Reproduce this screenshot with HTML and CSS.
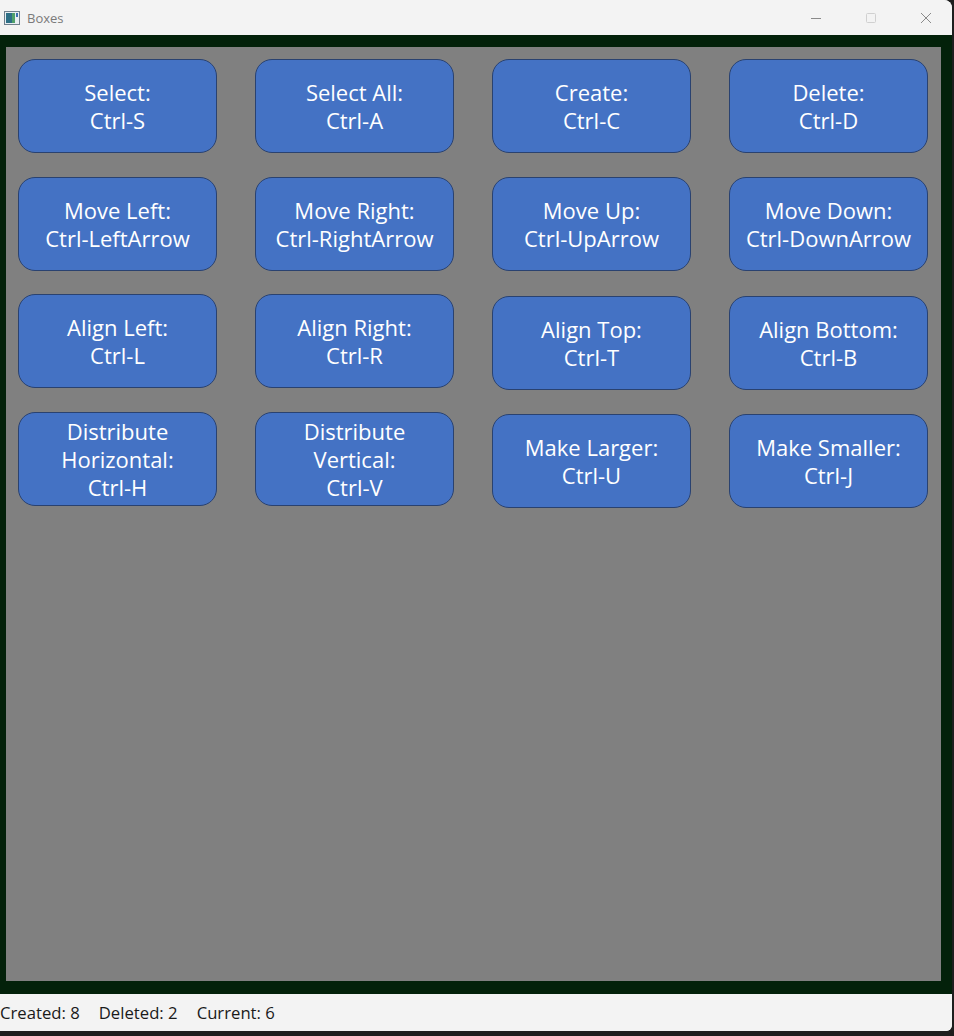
FILE: index.html
```html
<!DOCTYPE html>
<html>
<head>
<meta charset="utf-8">
<title>Boxes</title>
<link rel="stylesheet" href="styles.css">
</head>
<body>
<div class="window">
  <div class="titlebar">
    <svg class="appicon" width="16" height="14" viewBox="0 0 16 14">
      <rect x="0.5" y="0.5" width="15" height="13" fill="#e8eef2" stroke="#6f7f8c"/>
      <rect x="2" y="2" width="6" height="10" fill="#2d6f86"/>
      <rect x="8" y="2" width="3" height="10" fill="#4fa06a"/>
      <rect x="12" y="2" width="2" height="4" fill="#3b6fb0"/>
    </svg>
    <span class="title">Boxes</span>
    <div class="controls">
      <span class="ctl"><svg width="12" height="12" viewBox="0 0 12 12"><line x1="1" y1="6.5" x2="11" y2="6.5" stroke="#8a8a8a" stroke-width="1"/></svg></span>
      <span class="ctl"><svg width="12" height="12" viewBox="0 0 12 12"><rect x="1.5" y="1.5" width="9" height="9" rx="1" fill="none" stroke="#d0d0d0" stroke-width="1"/></svg></span>
      <span class="ctl"><svg width="12" height="12" viewBox="0 0 12 12"><path d="M1 1 L11 11 M11 1 L1 11" stroke="#8a8a8a" stroke-width="1"/></svg></span>
    </div>
  </div>
  <div class="client">
    <div class="canvas">
      <div class="box">Select:<br>Ctrl-S</div>
      <div class="box">Select All:<br>Ctrl-A</div>
      <div class="box">Create:<br>Ctrl-C</div>
      <div class="box">Delete:<br>Ctrl-D</div>
      <div class="box">Move Left:<br>Ctrl-LeftArrow</div>
      <div class="box">Move Right:<br>Ctrl-RightArrow</div>
      <div class="box">Move Up:<br>Ctrl-UpArrow</div>
      <div class="box">Move Down:<br>Ctrl-DownArrow</div>
      <div class="box">Align Left:<br>Ctrl-L</div>
      <div class="box">Align Right:<br>Ctrl-R</div>
      <div class="box shifted">Align Top:<br>Ctrl-T</div>
      <div class="box shifted">Align Bottom:<br>Ctrl-B</div>
      <div class="box">Distribute<br>Horizontal:<br>Ctrl-H</div>
      <div class="box">Distribute<br>Vertical:<br>Ctrl-V</div>
      <div class="box shifted">Make Larger:<br>Ctrl-U</div>
      <div class="box shifted">Make Smaller:<br>Ctrl-J</div>
    </div>
  </div>
  <div class="statusbar">
    <span class="stat">Created: 8</span>
    <span class="stat">Deleted: 2</span>
    <span class="stat">Current: 6</span>
  </div>
</div>
</body>
</html>
```
FILE: styles.css
```css
html, body {
  margin: 0;
  padding: 0;
}
body {
  background: #1e1e1e;
  width: 954px;
  height: 1036px;
  overflow: hidden;
}
.window {
  width: 952px;
  height: 1031px;
  display: flex;
  flex-direction: column;
  background: #f3f3f3;
  border-top-right-radius: 8px;
  border-bottom-right-radius: 6px;
  overflow: hidden;
}
.titlebar {
  height: 35px;
  flex: 0 0 35px;
  display: flex;
  align-items: center;
  background: #f3f3f3;
  font-family: "Open Sans", "Noto Sans", sans-serif;
}
.appicon {
  margin-left: 4px;
  margin-right: 7px;
}
.title {
  font-size: 13px;
  color: #7a7a7a;
}
.controls {
  margin-left: auto;
  display: flex;
  align-items: center;
  padding-right: 20px;
}
.ctl {
  display: flex;
  width: 12px;
  height: 12px;
  margin-left: 43px;
}
.client {
  flex: 0 0 959px;
  background: #03210a;
  padding: 12px 11px 13px 6px;
  box-sizing: border-box;
  display: flex;
}
.canvas {
  flex: 1;
  background: #808080;
  padding: 12px 0 0 12px;
  display: grid;
  grid-template-columns: repeat(4, 199px);
  grid-auto-rows: 94px;
  column-gap: 38px;
  row-gap: 23.5px;
  align-content: start;
}
.box {
  box-sizing: border-box;
  background: #4472c4;
  border: 1px solid #2a4270;
  border-radius: 17px;
  color: #ffffff;
  font-family: "Open Sans", "Noto Sans", sans-serif;
  font-size: 22px;
  line-height: 28px;
  display: flex;
  align-items: center;
  justify-content: center;
  text-align: center;
  white-space: nowrap;
}
.shifted {
  margin-top: 2px;
  margin-bottom: -2px;
}
.statusbar {
  flex: 1;
  display: flex;
  align-items: center;
  background: #f3f3f3;
  font-family: "Open Sans", "Noto Sans", sans-serif;
  font-size: 16.7px;
  color: #1a1a1a;
  padding-bottom: 1px;
}
.stat {
  margin-right: 19px;
}
```
